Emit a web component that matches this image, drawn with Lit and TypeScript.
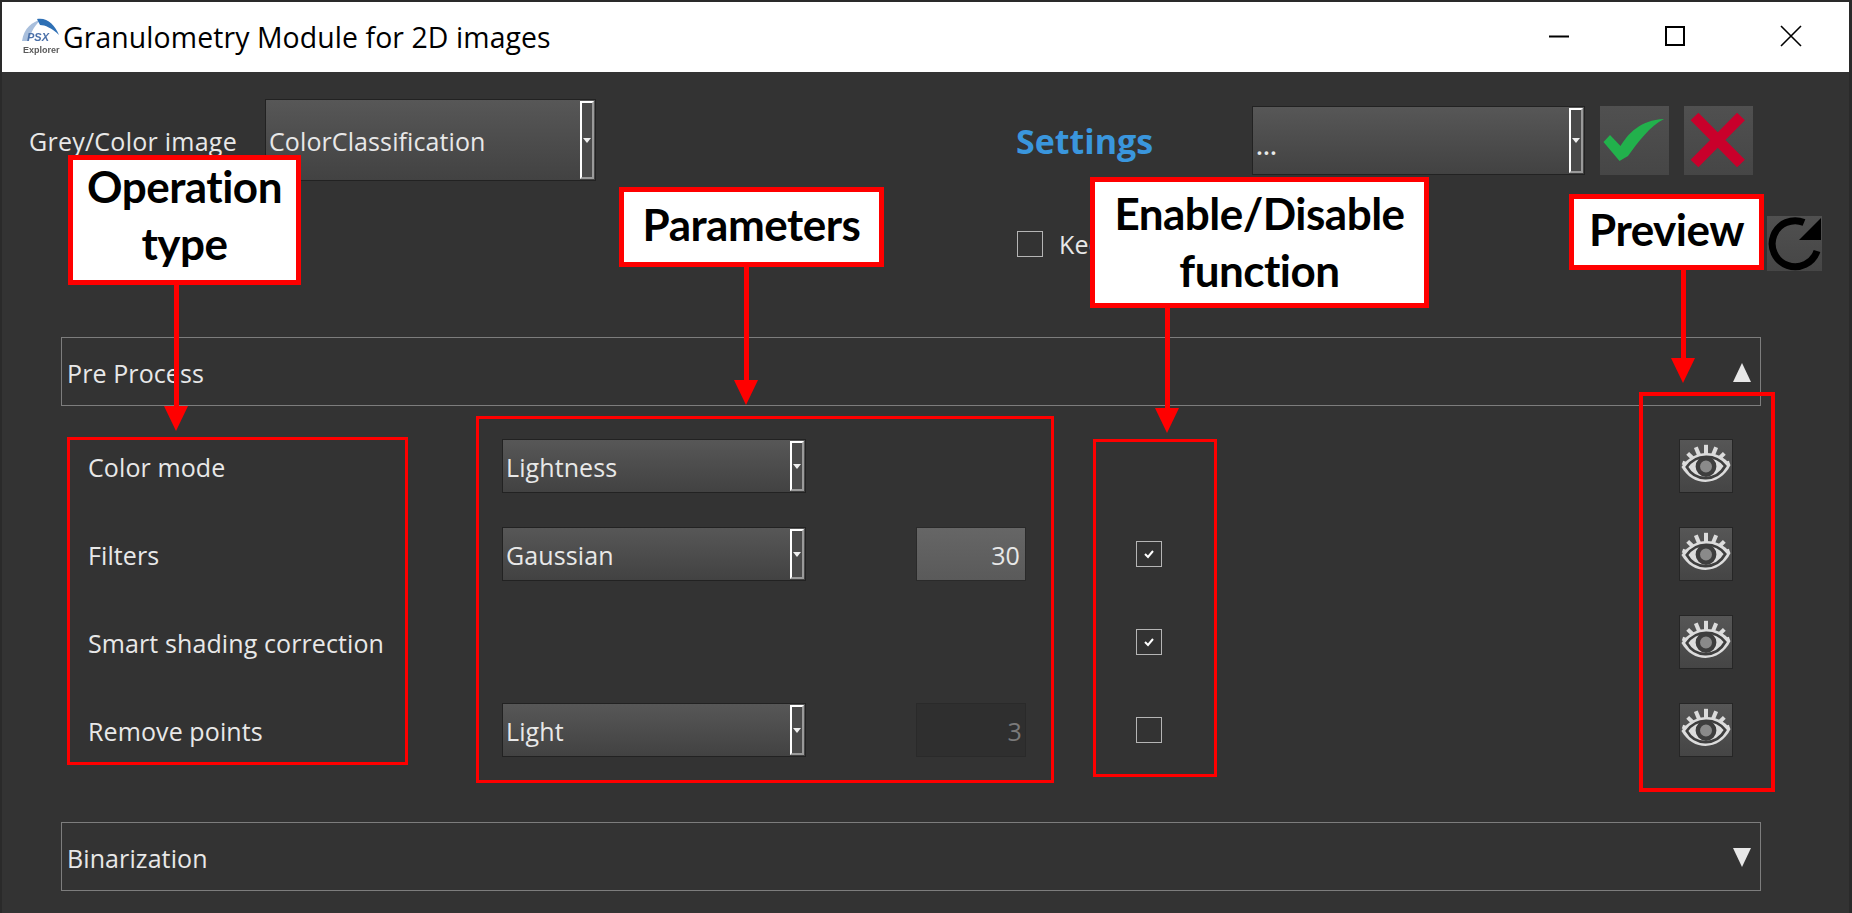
import { LitElement, html, css, svg } from "lit";
import { customElement } from "lit/decorators.js";

const Eye = () => html`<svg class="ico" viewBox="0 0 54 54">
  <g stroke="#dcdcdc" stroke-width="4.2" stroke-linecap="butt">
    ${[-70, -47, -24, 0, 24, 47, 70].map((a) => {
      const r = (a * Math.PI) / 180;
      const x1 = 27 + 16 * Math.sin(r), y1 = 32 - 16 * Math.cos(r);
      const x2 = 27 + 26 * Math.sin(r), y2 = 33 - 28 * Math.cos(r);
      return svg`<line x1=${x1} y1=${y1} x2=${x2} y2=${y2}></line>`;
    })}
  </g>
  <path d="M1.5 28 C14 9 40 9 52.5 26 C42 48 14 50 1.5 28Z" fill="#dcdcdc"></path>
  <path d="M7 28 C17 14 37 14 47 27 C38 43 16 44 7 28Z" fill="#dcdcdc" stroke="#3e3e3e" stroke-width="2.8"></path>
  <circle cx="27" cy="27.5" r="8.5" fill="#8a8a8a" stroke="#3e3e3e" stroke-width="4.6"></circle>
</svg>`;

const rows = [
  { label: "Color mode", combo: "Lightness", spin: null, check: null },
  { label: "Filters", combo: "Gaussian", spin: { v: "30", off: false }, check: true },
  { label: "Smart shading correction", combo: null, spin: null, check: true },
  { label: "Remove points", combo: "Light", spin: { v: "3", off: true }, check: false },
];

const arrows = [
  { x: 176.5, y1: 285, y2: 431 },
  { x: 746, y1: 267, y2: 405 },
  { x: 1167, y1: 306, y2: 433 },
  { x: 1683, y1: 270, y2: 383 },
];

@customElement("app-root")
export class AppRoot extends LitElement {
  static styles = css`
    :host { display: block; width: 1852px; height: 913px; overflow: hidden; }
    * { box-sizing: border-box; }
    .window {
      position: relative; width: 1852px; height: 913px; background: #333;
      border-top: 2px solid #2a2a2a; border-left: 2px solid #2a2a2a; border-right: 3px solid #2a2a2a;
      font-family: "Open Sans", "Noto Sans", sans-serif; color: #e8e8e8;
      font-size: 25px; letter-spacing: 0.1px;
    }
    .titlebar {
      height: 70px; background: #fff; color: #000; display: flex; align-items: center;
      padding-left: 16px; font-size: 28.4px;
    }
    .logo { width: 42px; height: 42px; flex: none; margin-right: 3px; margin-top: 1px; overflow: visible; }
    .title { flex: 1; }
    .wbtn { width: 116px; height: 70px; display: flex; align-items: center; justify-content: center; }
    .wbtn svg { width: 24px; height: 24px; }
    .wctl { display: flex; margin-top: -2px; }
    .top { display: flex; align-items: center; padding: 27px 0 0 27px; }
    .glabel { width: 236px; padding-top: 1px; letter-spacing: 0.25px; }
    .combo {
      display: flex; align-items: center; position: relative; height: 100%;
      background: linear-gradient(#575757, #424242); border: 1px solid #222;
      padding-left: 3px;
    }
    .combo .val { flex: 1; padding-top: 1px; }
    .drop {
      position: absolute; right: 1px; top: 1px; bottom: 1px; width: 14px;
      border: 2px solid #9a9a9a; border-top-color: #fff; border-left-color: #fff;
      background: #4a4a4a; display: flex; align-items: center; justify-content: center;
    }
    .drop i { display: block; width: 0; height: 0; border: 4px solid transparent; border-top: 5px solid #eee; border-bottom: 0; }
    .c1 { width: 331px; height: 82px; }
    .settings { margin-left: 420px; width: 236px; color: #3a96dd; font-weight: 700; font-size: 34px; letter-spacing: 0; padding-top: 2px; }
    .c2 { width: 333px; height: 69px; }
    .c2 .val { font-weight: 600; padding-top: 10px; }
    .tbtn { width: 69px; height: 69px; margin-left: 15px; background: linear-gradient(#505050, #464646); }
    .ico { display: block; width: 100%; height: 100%; }
    .keep { display: flex; align-items: center; padding: 35px 27px 0 1015px; }
    .cb { width: 26px; height: 26px; border: 1px solid #b5b5b5; display: flex; align-items: center; justify-content: center; flex: none; }
    .cb svg { width: 12px; height: 12px; }
    .keep .cb { margin-right: 16px; }
    .reload { width: 55px; height: 55px; margin-left: auto; background: linear-gradient(#505050, #464646); }
    .section {
      margin-left: 59px; width: 1700px; height: 69px; border: 1px solid #7d7d7d; display: flex;
      align-items: center; justify-content: space-between; padding: 2px 9px 0 5px;
    }
    .s1 { margin-top: 66px; }
    .s2 { margin-top: 65px; }
    .tri { width: 0; height: 0; border-left: 9.5px solid transparent; border-right: 9.5px solid transparent; }
    .tri.up { border-bottom: 19px solid #e8e8e8; }
    .tri.down { border-top: 19px solid #e8e8e8; }
    .grid {
      display: grid; grid-template-columns: 414px 414px 220px 543px 54px;
      grid-auto-rows: 54px; row-gap: 34px; margin: 33px 0 0 86px; align-items: center;
    }
    .rowlabel { padding-top: 1px; }
    .grid .combo { width: 304px; height: 54px; }
    .slot { height: 54px; }
    .spin {
      width: 110px; height: 100%; border: 1px solid #2a2a2a; text-align: right; padding: 1px 5px 0 0;
      display: flex; align-items: center; justify-content: flex-end;
      background: linear-gradient(#666, #5a5a5a);
    }
    .spin.off { background: #2f2f2f; color: #7a7a7a; padding-right: 3px; }
    .eye { width: 54px; height: 54px; border: 1px solid #262626; background: linear-gradient(#565656, #454545); }
    .note {
      position: absolute; background: #fff; border: 5px solid #f00; color: #000;
      font-family: Lato, "Open Sans", sans-serif; font-weight: 700; font-size: 44px; line-height: 57px;
      letter-spacing: -0.5px; text-align: center; display: flex; align-items: center; justify-content: center;
    }
    .n-op { left: 66px; top: 153px; width: 233px; height: 130px; padding-bottom: 11px; }
    .n-par { left: 617px; top: 185px; width: 265px; height: 80px; padding-bottom: 6px; }
    .n-en { left: 1088px; top: 175px; width: 339px; height: 131px; padding-bottom: 1px; }
    .n-pre { left: 1567px; top: 192px; width: 195px; height: 76px; padding-bottom: 6px; }
    .frame { position: absolute; border: 3px solid #f00; }
    .f-op { left: 65px; top: 435px; width: 341px; height: 328px; }
    .f-par { left: 474px; top: 414px; width: 578px; height: 367px; }
    .f-en { left: 1091px; top: 437px; width: 124px; height: 338px; }
    .f-pre { left: 1637px; top: 390px; width: 136px; height: 400px; border-width: 4px; }
    .stem { position: absolute; width: 5px; background: #f00; }
    .head {
      position: absolute; width: 0; height: 0;
      border-left: 12.5px solid transparent; border-right: 12.5px solid transparent; border-top: 25px solid #f00;
    }
  `;

  render() {
    return html`<div class="window">
      <div class="titlebar">
        <svg class="logo" viewBox="0 0 42 42">
          <defs><filter id="b" x="-10%" y="-10%" width="120%" height="120%"><feGaussianBlur stdDeviation="0.7"></feGaussianBlur></filter></defs>
          <g filter="url(#b)">
            <path d="M4 24 C6 11 14 5 24 2 C17 8 13 14 11 24Z" fill="#a9bfdc"></path>
            <path d="M19 2 C29 0 37 8 41 18 C34 11 27 8 22 8Z" fill="#2f6fb5"></path>
            <text x="9" y="24" font-family="Liberation Sans" font-size="11" font-weight="700" font-style="italic" letter-spacing="0" fill="#4a6fa8">PSX</text>
            <text x="5" y="36" font-family="Liberation Sans" font-size="9" font-weight="700" letter-spacing="0" fill="#5a5a5a">Explorer</text>
          </g>
        </svg>
        <div class="title">Granulometry Module for 2D images</div>
        <div class="wctl">
          <div class="wbtn"><svg viewBox="0 0 24 24"><path d="M2 12.5H22" stroke="#000" stroke-width="2"></path></svg></div>
          <div class="wbtn"><svg viewBox="0 0 24 24"><path d="M3 3H21V21H3Z" fill="none" stroke="#000" stroke-width="2"></path></svg></div>
          <div class="wbtn"><svg viewBox="0 0 24 24"><path d="M2 2L22 22M22 2L2 22" stroke="#000" stroke-width="1.6"></path></svg></div>
        </div>
      </div>

      <div class="top">
        <div class="glabel">Grey/Color image</div>
        <div class="combo c1"><span class="val">ColorClassification</span><span class="drop"><i></i></span></div>
        <div class="settings">Settings</div>
        <div class="combo c2"><span class="val">...</span><span class="drop"><i></i></span></div>
        <div class="tbtn"><svg class="ico" viewBox="0 0 69 69"><path d="M3.5 36L10 29L20.5 40C28 28 40 14 64 13C50 20 38 36 28 50L19.5 55Z" fill="#22b14c"></path></svg></div>
        <div class="tbtn"><svg class="ico" viewBox="0 0 69 69"><path d="M10.5 10.5L57 57.5M57 10.5L10.5 57.5" stroke="#c9002b" stroke-width="11" fill="none"></path></svg></div>
      </div>

      <div class="keep">
        <span class="cb"></span><span>Keep</span>
        <div class="reload"><svg class="ico" viewBox="0 0 55 55"><path d="M50 35A23 23 0 1 1 37 6.5" fill="none" stroke="#000" stroke-width="7"></path><path d="M54 2V24H32Z" fill="#000"></path></svg></div>
      </div>

      <div class="section s1"><span>Pre Process</span><span class="tri up"></span></div>

      <div class="grid">
        ${rows.map(
          (r) => html`
            <div class="rowlabel">${r.label}</div>
            <div>${r.combo
              ? html`<div class="combo"><span class="val">${r.combo}</span><span class="drop"><i></i></span></div>`
              : ""}</div>
            <div class="slot">${r.spin
              ? html`<div class="spin ${r.spin.off ? "off" : ""}">${r.spin.v}</div>`
              : ""}</div>
            <div>${r.check === null
              ? ""
              : html`<span class="cb">${r.check
                  ? html`<svg viewBox="0 0 12 12"><path d="M2 6L5 9L10 3" fill="none" stroke="#fff" stroke-width="2"></path></svg>`
                  : ""}</span>`}</div>
            <div class="eye">${Eye()}</div>
          `
        )}
      </div>

      <div class="section s2"><span>Binarization</span><span class="tri down"></span></div>

      <div class="frame f-op"></div>
      <div class="frame f-par"></div>
      <div class="frame f-en"></div>
      <div class="frame f-pre"></div>
      ${arrows.map(
        (a) => html`
          <div class="stem" style="left:${a.x - 4.5}px;top:${a.y1 - 2}px;height:${a.y2 - a.y1 - 20}px"></div>
          <div class="head" style="left:${a.x - 14.5}px;top:${a.y2 - 27}px"></div>
        `
      )}
      <div class="note n-op">Operation<br />type</div>
      <div class="note n-par">Parameters</div>
      <div class="note n-en">Enable/Disable<br />function</div>
      <div class="note n-pre">Preview</div>
    </div>`;
  }
}
